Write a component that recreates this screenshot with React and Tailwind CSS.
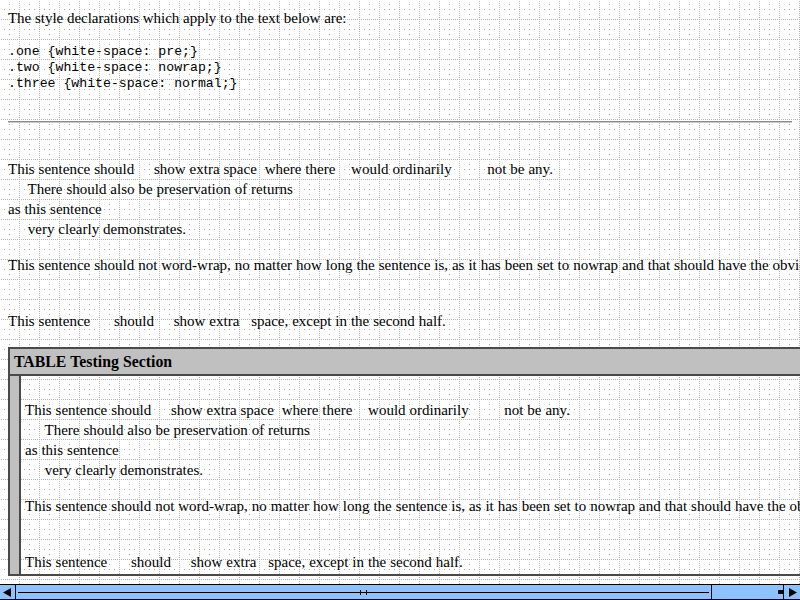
import React from "react";

const serif = "font-['Liberation_Serif',_'Times_New_Roman',_serif]";
const mono = "font-['Liberation_Mono',_'Courier_New',_monospace]";

const lineOne = `This sentence should     show extra space  where there    would ordinarily         not be any.
     There should also be preservation of returns
as this sentence
     very clearly demonstrates.`;

const nowrapLine =
    "This sentence should not word-wrap, no matter how long the sentence is, as it has been set to nowrap and that should have the obvious effect.";

function TestBlock() {
    return (
        <>
            <p className="whitespace-pre leading-[20px]">{lineOne}</p>
            <p className="mt-[16px] whitespace-nowrap leading-[20px]">{nowrapLine}</p>
            <p className="mt-[36px] whitespace-pre leading-[20px]">
                {"This sentence      should     show extra   space, "}
                <span className="whitespace-normal">except in the      second half</span>.
            </p>
        </>
    );
}

function ScrollBar() {
    return (
        <div className="flex h-[16px] shrink-0 border-y border-black bg-[#8cc3ff]">
            {/* left arrow */}
            <div className="flex w-[16px] shrink-0 items-center justify-center border-r border-black">
                <svg width="9" height="9" viewBox="0 0 9 9">
                    <path d="M0 4.5 L8 0 L8 9 Z" fill="#000" />
                </svg>
            </div>
            {/* thumb */}
            <div className="flex w-[696px] shrink-0 items-center border-r border-black px-[2px]">
                <div className="relative h-px w-full bg-black">
                    <span className="absolute left-[342px] top-[-2px] h-[5px] w-px bg-black" />
                    <span className="absolute left-[348px] top-[-2px] h-[5px] w-px bg-black" />
                </div>
            </div>
            <div className="flex flex-1 items-center justify-end">
                <div className="h-[4px] w-[5px] bg-black" />
            </div>
            {/* right arrow */}
            <div className="flex w-[17px] shrink-0 items-center justify-center border-l border-black">
                <svg width="9" height="9" viewBox="0 0 9 9">
                    <path d="M9 4.5 L1 0 L1 9 Z" fill="#000" />
                </svg>
            </div>
        </div>
    );
}

export default function App() {
    return (
        <div className={`flex h-[600px] w-[800px] flex-col overflow-hidden bg-white text-[15px] text-black [word-spacing:0.2px] ${serif}`}>
            <div className="min-h-0 flex-1 overflow-hidden px-2 pt-2 [background-image:conic-gradient(from_90deg_at_19px_1px,#b4b4b4_0_90deg,transparent_90deg),conic-gradient(from_90deg_at_1px_19px,#b4b4b4_0_90deg,transparent_90deg),radial-gradient(circle_at_9.5px_4.5px,#a8a8a8_0.7px,transparent_0.9px),radial-gradient(circle_at_4.5px_9.5px,#a8a8a8_0.7px,transparent_0.9px),radial-gradient(circle_at_9.5px_9.5px,#a8a8a8_0.7px,transparent_0.9px),radial-gradient(circle_at_14.5px_9.5px,#a8a8a8_0.7px,transparent_0.9px),radial-gradient(circle_at_9.5px_14.5px,#a8a8a8_0.7px,transparent_0.9px)] [background-size:20px_2px,2px_20px,20px_20px,20px_20px,20px_20px,20px_20px,20px_20px]">
                <p className="leading-[20px] tracking-[-0.05px]">The style declarations which apply to the text below are:</p>
                <pre className={`mt-[16px] text-[13.2px] leading-[16px] [word-spacing:0] ${mono}`}>
                    {`.one {white-space: pre;}
.two {white-space: nowrap;}
.three {white-space: normal;}`}
                </pre>

                <div className="mt-[29px] h-[2px] border-t border-b border-t-[#8a8a8a] border-b-[#c8c8c8]" />

                <div className="mt-[36px]">
                    <TestBlock />
                </div>

                {/* TABLE Testing Section */}
                <div className="mt-[16px] w-max border-y-2 border-l-2 border-y-[#4a4a4a] border-l-[#4a4a4a]">
                    <div className="h-[27px] border-b-2 border-b-[#4a4a4a] bg-[#c0c0c0] pl-[4px] pt-[3px] leading-[20px]">
                        <strong className="text-[15.8px]">TABLE Testing Section</strong>
                    </div>
                    <div className="flex">
                        <div className="w-[11px] shrink-0 border-r-2 border-r-[#4a4a4a] bg-[#c0c0c0]" />
                        <div className="pb-[2px] pl-[4px] pt-[24px]">
                            <TestBlock />
                        </div>
                    </div>
                </div>
            </div>
            <ScrollBar />
        </div>
    );
}
